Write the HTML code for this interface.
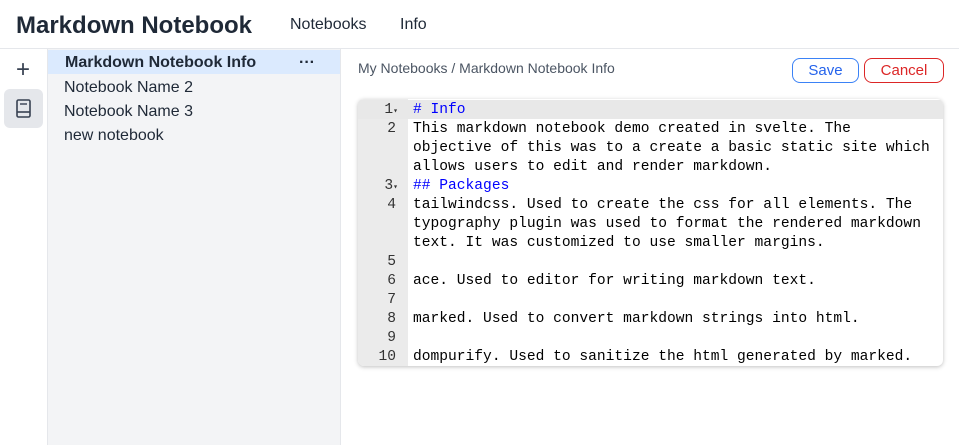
<!DOCTYPE html>
<html><head><meta charset="utf-8"><style>
*{box-sizing:border-box;margin:0;padding:0}
body{width:959px;height:445px;overflow:hidden;background:#fff;font-family:"Liberation Sans",sans-serif;color:#111827;position:relative}
.hdr{position:absolute;left:0;top:0;width:959px;height:49px;border-bottom:1px solid #e5e7eb}
.title{position:absolute;left:16px;top:12px;font-size:24px;font-weight:bold;color:#1f2937}
.nav{position:absolute;top:16px;font-size:16px;color:#1f2937}
.side{position:absolute;left:0;top:49px;width:48px;height:396px;border-right:1px solid #e5e7eb}
.list{position:absolute;left:48px;top:49px;width:293px;height:396px;background:#f3f4f6;border-right:1px solid #e5e7eb}
.item{position:absolute;left:0;width:292px;height:24px;font-size:16px;padding-left:16px;line-height:24px;color:#1f2937}
.sel{background:#dbeafe;font-weight:bold;padding-left:17px}
.crumb{position:absolute;left:358px;top:60px;font-size:14px;color:#4b5563}
.btn{position:absolute;top:58px;height:25px;border-radius:8px;font-size:15px;line-height:23px;text-align:center;background:#fff}
.ed{position:absolute;left:358px;top:99px;width:585px;height:267px;border-radius:6px;box-shadow:0 1px 4px rgba(0,0,0,.25);overflow:hidden;background:#fff}
.gut{position:absolute;left:0;top:0;width:50px;height:267px;background:#ebebeb}
.act{position:absolute;left:0;top:1px;width:585px;height:19px;background:#e8e8e8}
.ln{position:absolute;width:40px;text-align:right;font:14.6px/19px "Liberation Mono",monospace;color:#333}
.tx{position:absolute;left:55px;font:14.6px "Liberation Mono",monospace;color:#000;white-space:pre}
.h{color:#0000ff}
</style></head><body>
<div class="hdr"><div class="title">Markdown Notebook</div>
<div class="nav" style="left:290px">Notebooks</div><div class="nav" style="left:400px">Info</div></div>
<div class="side">
<div style="position:absolute;left:16px;top:7px;font-size:24px;color:#374151;font-weight:300">+</div>
<div style="position:absolute;left:4px;top:40px;width:39px;height:39px;background:#e5e7eb;border-radius:6px">
<svg width="39" height="39" viewBox="0 0 39 39"><rect x="13" y="11" width="13" height="17" rx="1.5" fill="none" stroke="#374151" stroke-width="1.6"/><line x1="13" y1="23" x2="26" y2="23" stroke="#374151" stroke-width="1.6"/><line x1="16" y1="15" x2="23" y2="15" stroke="#374151" stroke-width="1.4"/></svg></div>
</div>
<div class="list">
<div class="item sel" style="top:1px;line-height:26px">Markdown Notebook Info<span style="position:absolute;left:251px;top:0px;font-weight:bold">···</span></div>
<div class="item" style="top:27px">Notebook Name 2</div>
<div class="item" style="top:51px">Notebook Name 3</div>
<div class="item" style="top:75px">new notebook</div>
</div>
<div class="crumb">My Notebooks / Markdown Notebook Info</div>
<div class="btn" style="left:792px;width:67px;border:1px solid #3b82f6;color:#2563eb">Save</div>
<div class="btn" style="left:864px;width:80px;border:1px solid #dc2626;color:#dc2626">Cancel</div>
<div class="ed"><div class="gut"></div><div class="act"></div>
<div class="ln" style="top:2px">1<span style="font-size:8px">▾</span></div>
<div class="ln" style="top:21px;width:38px">2</div>
<div class="ln" style="top:78px">3<span style="font-size:8px">▾</span></div>
<div class="ln" style="top:97px;width:38px">4</div>
<div class="ln" style="top:154px;width:38px">5</div>
<div class="ln" style="top:173px;width:38px">6</div>
<div class="ln" style="top:192px;width:38px">7</div>
<div class="ln" style="top:211px;width:38px">8</div>
<div class="ln" style="top:230px;width:38px">9</div>
<div class="ln" style="top:249px;width:38px">10</div>
<div class="tx" style="top:2px;line-height:19px"><span class="h"># Info</span>
This markdown notebook demo created in svelte. The
objective of this was to a create a basic static site which
allows users to edit and render markdown.
<span class="h">## Packages</span>
tailwindcss. Used to create the css for all elements. The
typography plugin was used to format the rendered markdown
text. It was customized to use smaller margins.

ace. Used to editor for writing markdown text.

marked. Used to convert markdown strings into html.

dompurify. Used to sanitize the html generated by marked.</div>
</div>
</body></html>
